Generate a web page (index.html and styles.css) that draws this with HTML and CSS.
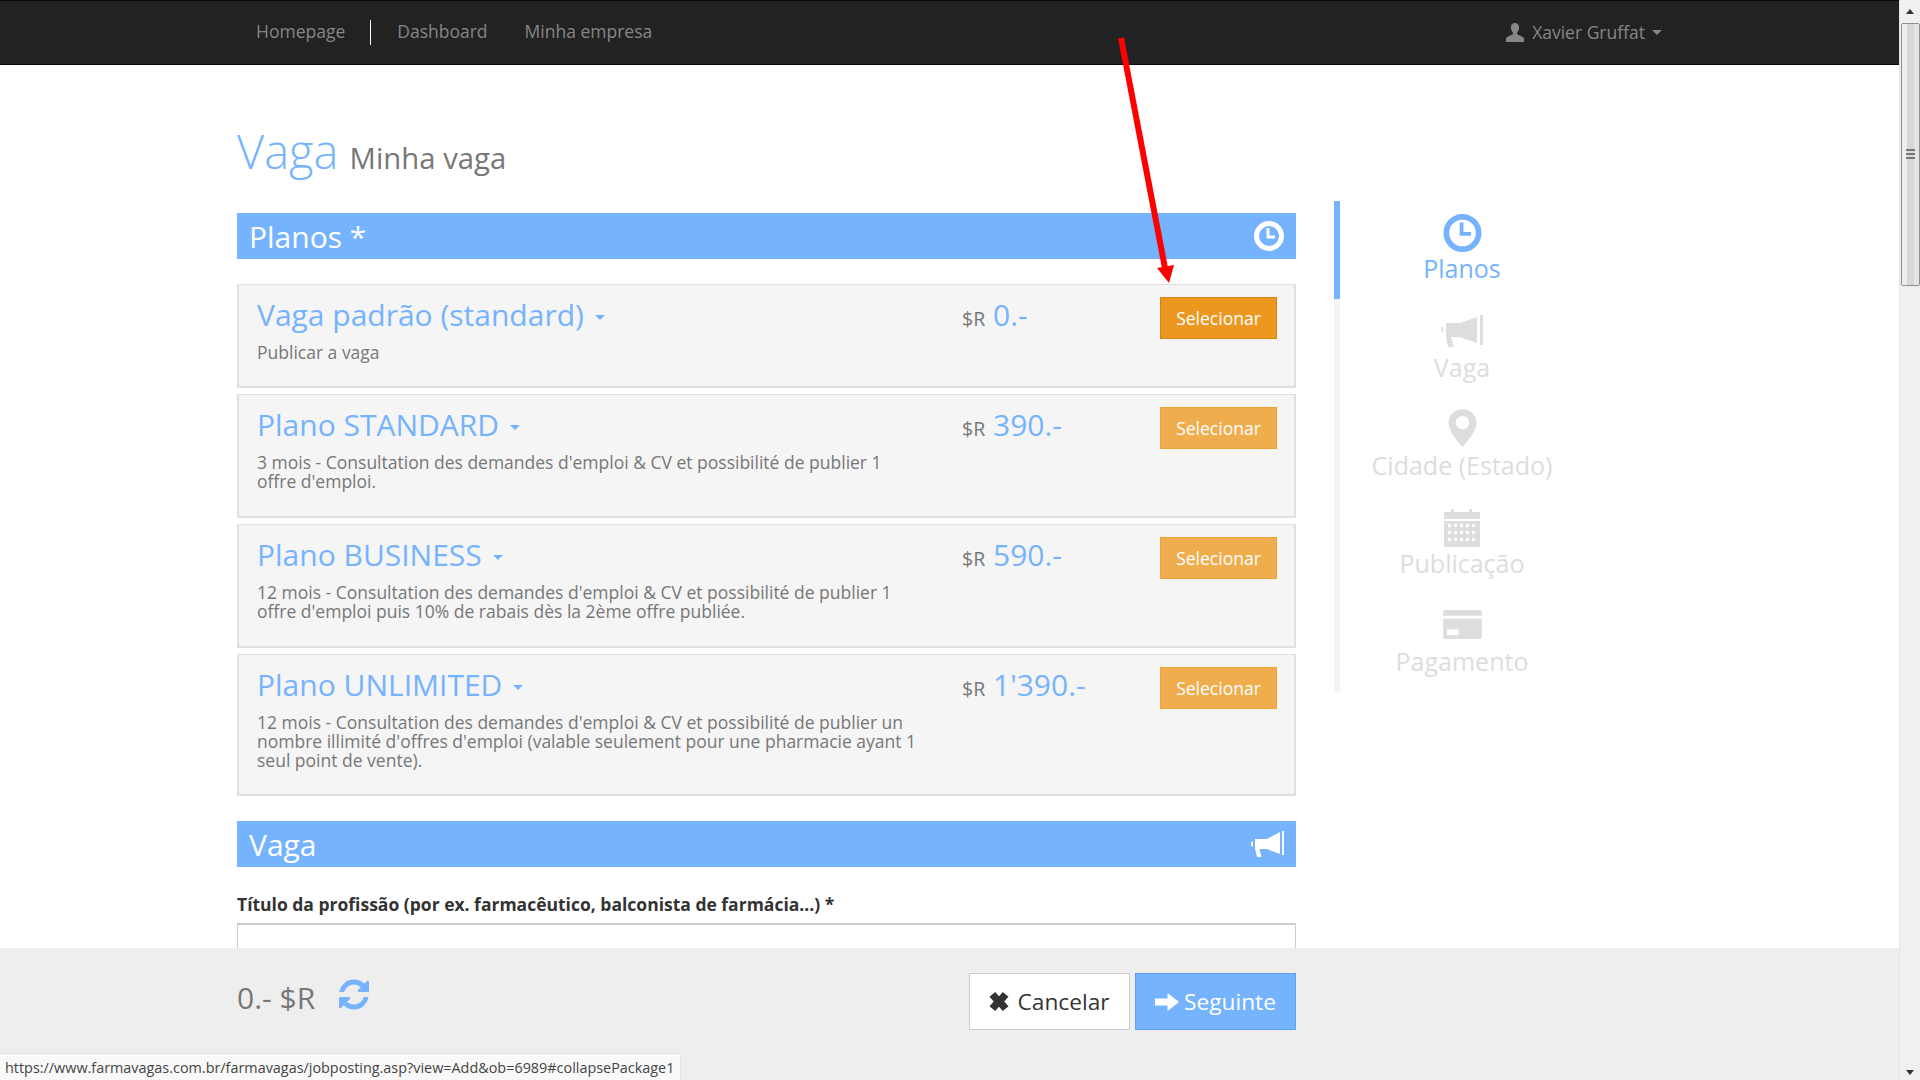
FILE: index.html
```html
<!DOCTYPE html>
<html lang="pt">
<head>
  <meta charset="UTF-8">
  <title>Vaga</title>
  <link rel="stylesheet" href="styles.css">
</head>
<body>
  <div class="window">
    <div class="page">
      <nav class="navbar">
        <ul class="navlinks">
          <li class="first">Homepage</li>
          <li>Dashboard</li>
          <li>Minha empresa</li>
        </ul>
        <div class="navuser">
          <svg class="ico" width="20" height="19" viewBox="0 0 18 18"><path d="M9 0c2.600 0 3.900 1.800 3.900 4.300 0 1.900-.8 3.600-1.900 4.700v1.500c0 .8 5.800 1.900 6.600 4.500v3.500H.4V15c.8-2.600 6.600-3.700 6.600-4.500V9C5.900 7.900 5.100 6.200 5.100 4.300 5.100 1.800 6.400 0 9 0z"/></svg>
          <span>Xavier Gruffat</span><i class="caret"></i>
        </div>
      </nav>

      <div class="content">
        <div class="main">
          <h1 class="pagetitle">Vaga <small>Minha vaga</small></h1>

          <div class="sectionbar">
            <span>Planos *</span>
            <svg class="ico-w" width="30" height="30" viewBox="0 0 30 30"><circle cx="15" cy="15" r="12.500" fill="none" stroke="currentColor" stroke-width="5"/><path d="M12.500 7h3v7.500H21v3h-8.500z"/></svg>
          </div>

          <div class="plan">
            <div class="plan-info">
              <h3>Vaga padrão (standard) <i class="caret"></i></h3>
              <p>Publicar a vaga</p>
            </div>
            <div class="plan-price"><small>$R</small> 0.-</div>
            <div class="btn-orange active">Selecionar</div>
          </div>
          <div class="plan two">
            <div class="plan-info">
              <h3>Plano STANDARD <i class="caret"></i></h3>
              <p>3 mois - Consultation des demandes d'emploi &amp; CV et possibilité de publier 1 offre d'emploi.</p>
            </div>
            <div class="plan-price"><small>$R</small> 390.-</div>
            <div class="btn-orange">Selecionar</div>
          </div>
          <div class="plan two">
            <div class="plan-info">
              <h3>Plano BUSINESS <i class="caret"></i></h3>
              <p>12 mois - Consultation des demandes d'emploi &amp; CV et possibilité de publier 1 offre d'emploi puis 10% de rabais dès la 2ème offre publiée.</p>
            </div>
            <div class="plan-price"><small>$R</small> 590.-</div>
            <div class="btn-orange">Selecionar</div>
          </div>
          <div class="plan">
            <div class="plan-info">
              <h3>Plano UNLIMITED <i class="caret"></i></h3>
              <p>12 mois - Consultation des demandes d'emploi &amp; CV et possibilité de publier un nombre illimité d'offres d'emploi (valable seulement pour une pharmacie ayant 1 seul point de vente).</p>
            </div>
            <div class="plan-price"><small>$R</small> 1'390.-</div>
            <div class="btn-orange">Selecionar</div>
          </div>

          <div class="sectionbar second">
            <span>Vaga</span>
            <svg class="ico-w" width="34" height="28" viewBox="0 0 34 28"><path d="M32 1h2v24h-2zM30 2v22l-13-5H9.500l2 8H7L5 18.500V9h12zM3 11v6l-2-1.500v-3z"/></svg>
          </div>
          <label class="fieldlabel">Título da profissão (por ex. farmacêutico, balconista de farmácia...) *</label>
          <div class="inp"></div>
        </div>

        <ul class="steps">
          <li class="on">
            <svg class="st-clock" width="39" height="38" viewBox="0 0 40 40"><circle cx="20" cy="20" r="17" fill="none" stroke="currentColor" stroke-width="6"/><path d="M17 9h4v10h8v4H17z"/></svg>
            <span>Planos</span>
          </li>
          <li>
            <svg class="st-horn" width="42" height="32" viewBox="0 0 42 32"><path d="M39 0h3v30h-3zM36 2v26l-17-6h-9l3 10H7L5 22V8h14zM2 11v7L0 16v-3z"/></svg>
            <span>Vaga</span>
          </li>
          <li>
            <svg class="st-pin" width="29" height="39" viewBox="0 0 30 40"><path fill-rule="evenodd" d="M15 0c8 0 14.500 6 14.500 14 0 9-9 18-14.500 25.500C9.500 32 .5 23 .5 14 .5 6 7 0 15 0zm0 7a7 7 0 1 0 0 14 7 7 0 0 0 0-14z"/></svg>
            <span>Cidade (Estado)</span>
          </li>
          <li>
            <svg class="st-cal" width="36" height="38" viewBox="0 0 36 38"><path fill-rule="evenodd" d="M7 0h3v3h15V0h3v3h8v7H0V3h7zM0 12h36v25a1 1 0 0 1-1 1H1a1 1 0 0 1-1-1zm4 3v3h3v-3zm6 0v3h3v-3zm6 0v3h3v-3zm6 0v3h3v-3zm6 0v3h3v-3zM4 22v3h3v-3zm6 0v3h3v-3zm6 0v3h3v-3zm6 0v3h3v-3zm6 0v3h3v-3zM4 29v3h3v-3zm6 0v3h3v-3zm6 0v3h3v-3zm6 0v3h3v-3zm6 0v3h3v-3z"/></svg>
            <span>Publicação</span>
          </li>
          <li>
            <svg class="st-card" width="39" height="29" viewBox="0 0 40 30"><path fill-rule="evenodd" d="M2 0h36a2 2 0 0 1 2 2v4H0V2a2 2 0 0 1 2-2zM0 9h40v19a2 2 0 0 1-2 2H2a2 2 0 0 1-2-2zm4 11v6h12v-6z"/></svg>
            <span>Pagamento</span>
          </li>
        </ul>
      </div>

      <footer class="footbar">
        <div class="total">
          <span>0.- $R</span>
          <svg class="refresh" width="30" height="31" viewBox="0 0 1536 1536"><path d="M1511 928q0 5-1 7-64 268-268 434.500T764 1536q-146 0-282.500-55T238 1324l-129 129q-19 19-45 19t-45-19-19-45V960q0-26 19-45t45-19h448q26 0 45 19t19 45-19 45l-137 137q71 66 161 102t187 36q134 0 250-65t186-179q11-17 53-117 8-23 30-23h192q13 0 22.500 9.500t9.500 22.500zm25-800v448q0 26-19 45t-45 19h-448q-26 0-45-19t-19-45 19-45l138-138q-148-137-349-137-134 0-250 65T332 500q-11 17-53 117-8 23-30 23H50q-13 0-22.500-9.500T18 608v-7q65-268 270-434.500T768 0q146 0 284 55.500T1297 212l130-129q19-19 45-19t45 19 19 45z"/></svg>
        </div>
        <div class="actions">
          <div class="btn btn-cancel">
            <svg width="20" height="19" viewBox="0 0 20 20"><path d="M6 0l4 4.500L14 0l6 5-4.500 5 4.500 5-6 5-4-4.500L6 20l-6-5 4.500-5L0 5z"/></svg>
            Cancelar
          </div>
          <div class="btn btn-next">
            <svg width="24" height="18" viewBox="0 0 23 20" preserveAspectRatio="none"><path d="M0 6h12V0l11 10-11 10v-6H0z"/></svg>
            Seguinte
          </div>
        </div>
      </footer>
    </div>

    <div class="scrollbar">
      <div class="sb-arrow up"></div>
      <div class="sb-thumb"><span></span><span></span><span></span></div>
      <div class="sb-rest"></div>
      <div class="sb-arrow down"></div>
    </div>
  </div>

  <div class="statusbar">https://www.farmavagas.com.br/farmavagas/jobposting.asp?view=Add&amp;ob=6989#collapsePackage1</div>

  <svg class="redarrow" width="80" height="270" viewBox="0 0 80 270">
    <line x1="11" y1="8" x2="55" y2="238" stroke="#fe0000" stroke-width="6"/>
    <polygon points="47,238 64,235 59,253" fill="#fe0000"/>
  </svg>
</body>
</html>
```

FILE: styles.css
```css
html,body,ul,li,h1,h3,p{margin:0;padding:0;}
html,body{
  height:100%;
  width:100%;
  overflow:hidden;
  background-color:#fff;
  font-family:"Open Sans","Noto Sans","Liberation Sans",sans-serif;
  font-size:16px;
  color:#777;
}
ul{list-style:none;}
.window{
  display:flex;
  height:100%;
}
.page{
  flex:1;
  min-width:0;
  display:flex;
  flex-direction:column;
}

/* top bar */
.navbar{
  height:65px;
  box-sizing:border-box;
  flex:none;
  background-color:#222;
  border-top:1px solid #080808;
  border-bottom:1px solid #080808;
  padding:0 237px 0 256px;
  display:flex;
  justify-content:space-between;
  align-items:center;
  color:#868686;
  font-size:17.5px;
}
.navlinks{
  display:flex;
  align-items:center;
}
.navlinks li{
  margin-right:37px;
  padding-bottom:2px;
  line-height:23px;
  white-space:nowrap;
}
.navlinks .first{
  margin-right:26px;
  padding-right:25px;
  border-right:1px solid #fff;
}
.navuser{
  display:flex;
  align-items:center;
}
.navuser span{
  padding-bottom:2px;
}
.navuser .ico{
  fill:#868686;
  margin-right:7px;
}
.navuser .caret{
  margin-left:7px;
}
.caret{
  display:inline-block;
  width:0;
  height:0;
  margin-left:6px;
  vertical-align:middle;
  border-top:5px solid;
  border-left:5px solid transparent;
  border-right:5px solid transparent;
}

/* content */
.content{
  flex:1;
  min-height:0;
  overflow:hidden;
  display:flex;
  padding-left:237px;
}
.main{
  width:1059px;
  flex:none;
}
.pagetitle{
  font-size:47px;
  font-weight:300;
  line-height:60px;
  color:#75b3ff;
  margin:56px 0 25px;
  white-space:nowrap;
}
.pagetitle small{
  font-size:29.3px;
  font-weight:400;
  color:#777;
  margin-left:-1px;
}
.sectionbar{
  height:46px;
  background-color:#75b3ff;
  color:#fff;
  font-size:30px;
  padding:0 12px;
  display:flex;
  justify-content:space-between;
  align-items:center;
  margin-bottom:25px;
}
.sectionbar.second{
  margin:25px 0 26px;
}
.ico-w{
  fill:currentColor;
  flex:none;
}
.plan{
  display:flex;
  align-items:flex-start;
  box-sizing:border-box;
  min-height:104px;
  margin-bottom:6px;
  padding:12px 17px 10px 18px;
  background-color:#f5f5f5;
  border:2px solid #e0e0e0;
  border-top-width:1px;
}
.plan.two{
  min-height:124px;
}
.plan-info{
  width:705px;
  flex:none;
  padding-right:41px;
  box-sizing:border-box;
}
.plan-info h3{
  font-size:30px;
  font-weight:400;
  line-height:40px;
  color:#75b3ff;
  margin:-2px 0 8px;
}
.plan-info h3 .caret{
  margin-left:3px;
}
.plan-info p{
  font-size:17.5px;
  line-height:19px;
  padding-bottom:14px;
}
.plan-price{
  flex:1;
  font-size:30px;
  line-height:40px;
  margin-top:-2px;
  color:#75b3ff;
  white-space:nowrap;
}
.plan-price small{
  font-size:19.5px;
  color:#777;
}
.btn-orange{
  width:117px;
  height:42px;
  flex:none;
  box-sizing:border-box;
  background-color:#f0ad4e;
  border:1px solid #eea236;
  color:#fff;
  font-size:17.5px;
  line-height:40px;
  text-align:center;
}
.btn-orange.active{
  background-color:#ec971f;
  border-color:#d58512;
}
.fieldlabel{
  display:block;
  font-size:17.5px;
  font-weight:700;
  line-height:23px;
  color:#333;
  margin-bottom:7px;
}
.inp{
  height:60px;
  border:2px solid #ccc;
  border-width:2px 1px 1px;
  background:#fff;
}

/* steps on the right */
.steps{
  width:256px;
  box-sizing:border-box;
  flex:none;
  margin:136px 0 0 38px;
  height:491px;
  border-left:6px solid #f4f4f4;
  color:#ddd;
  fill:#ddd;
  font-size:25px;
}
.steps li{
  height:98px;
  box-sizing:border-box;
  padding-bottom:13px;
  display:flex;
  flex-direction:column;
  align-items:center;
  justify-content:flex-end;
  width:256px;
  margin-left:-6px;
  line-height:34px;
  white-space:nowrap;
}
.steps li.on{
  padding:0 6px 14px 0;
  color:#75b3ff;
  fill:#75b3ff;
  border-left:6px solid #75b3ff;
}
.st-clock{margin-bottom:-1px;}
.st-horn{margin-bottom:3px;}
.st-pin{margin-bottom:0;}
.st-cal{margin-bottom:-1px;}
.st-card{margin-bottom:5px;}

/* bottom bar */
.footbar{
  height:132px;
  flex:none;
  background-color:#eee;
  padding:25px 0 0 237px;
  box-sizing:border-box;
  display:flex;
  align-items:flex-start;
}
.total{
  width:595px;
  flex:none;
  display:flex;
  align-items:center;
  font-size:30px;
  color:#777;
  gap:24px;
  padding-top:4px;
}
.refresh{
  fill:#75b3ff;
  margin-top:-7px;
}
.actions{
  width:464px;
  display:flex;
  justify-content:flex-end;
  gap:5px;
}
.btn{
  height:57px;
  box-sizing:border-box;
  display:flex;
  align-items:center;
  justify-content:center;
  gap:8px;
  font-size:22.7px;
}
.btn-cancel{
  width:161px;
  background:#fff;
  border:1px solid #ccc;
  color:#333;
  fill:#333;
}
.btn-next{
  width:161px;
  gap:5px;
  background:#75b3ff;
  border:1px solid #5f9ff0;
  color:#fff;
  fill:#fff;
}

/* fake browser scrollbar */
.scrollbar{
  width:21px;
  flex:none;
  background:#f0f0f0;
  border-left:1px solid #e3e3e3;
  box-sizing:border-box;
  display:flex;
  flex-direction:column;
  align-items:center;
}
.sb-arrow{
  width:0;
  height:0;
  flex:none;
  border-left:4px solid transparent;
  border-right:4px solid transparent;
}
.sb-arrow.up{
  border-bottom:5px solid #333;
  margin:9px 0 9px;
}
.sb-arrow.down{
  border-top:5px solid #333;
  margin:0 0 5px;
}
.sb-thumb{
  width:19px;
  height:263px;
  flex:none;
  box-sizing:border-box;
  border:1px solid #8f8f8f;
  border-radius:2px;
  padding-bottom:2px;
  background:linear-gradient(to right,#eee 0,#eee 30%,#d8d8d8 30%,#d8d8d8 70%,#e4e4e4 70%);
  display:flex;
  flex-direction:column;
  align-items:center;
  justify-content:center;
  gap:2px;
}
.sb-thumb span{
  display:block;
  width:9px;
  height:2px;
  background:#777;
}
.sb-rest{
  flex:1;
}

/* things lying on top */
.statusbar{
  position:absolute;
  left:0;
  bottom:0;
  height:27px;
  width:681px;
  box-sizing:border-box;
  background:#f9f9f9;
  border-top:1px solid #e4e4e4;
  border-right:1px solid #e4e4e4;
  font-size:14.4px;
  line-height:27px;
  padding-left:5px;
  color:#444;
  white-space:nowrap;
  overflow:hidden;
}
.redarrow{
  position:absolute;
  left:1110px;
  top:30px;
}
```
